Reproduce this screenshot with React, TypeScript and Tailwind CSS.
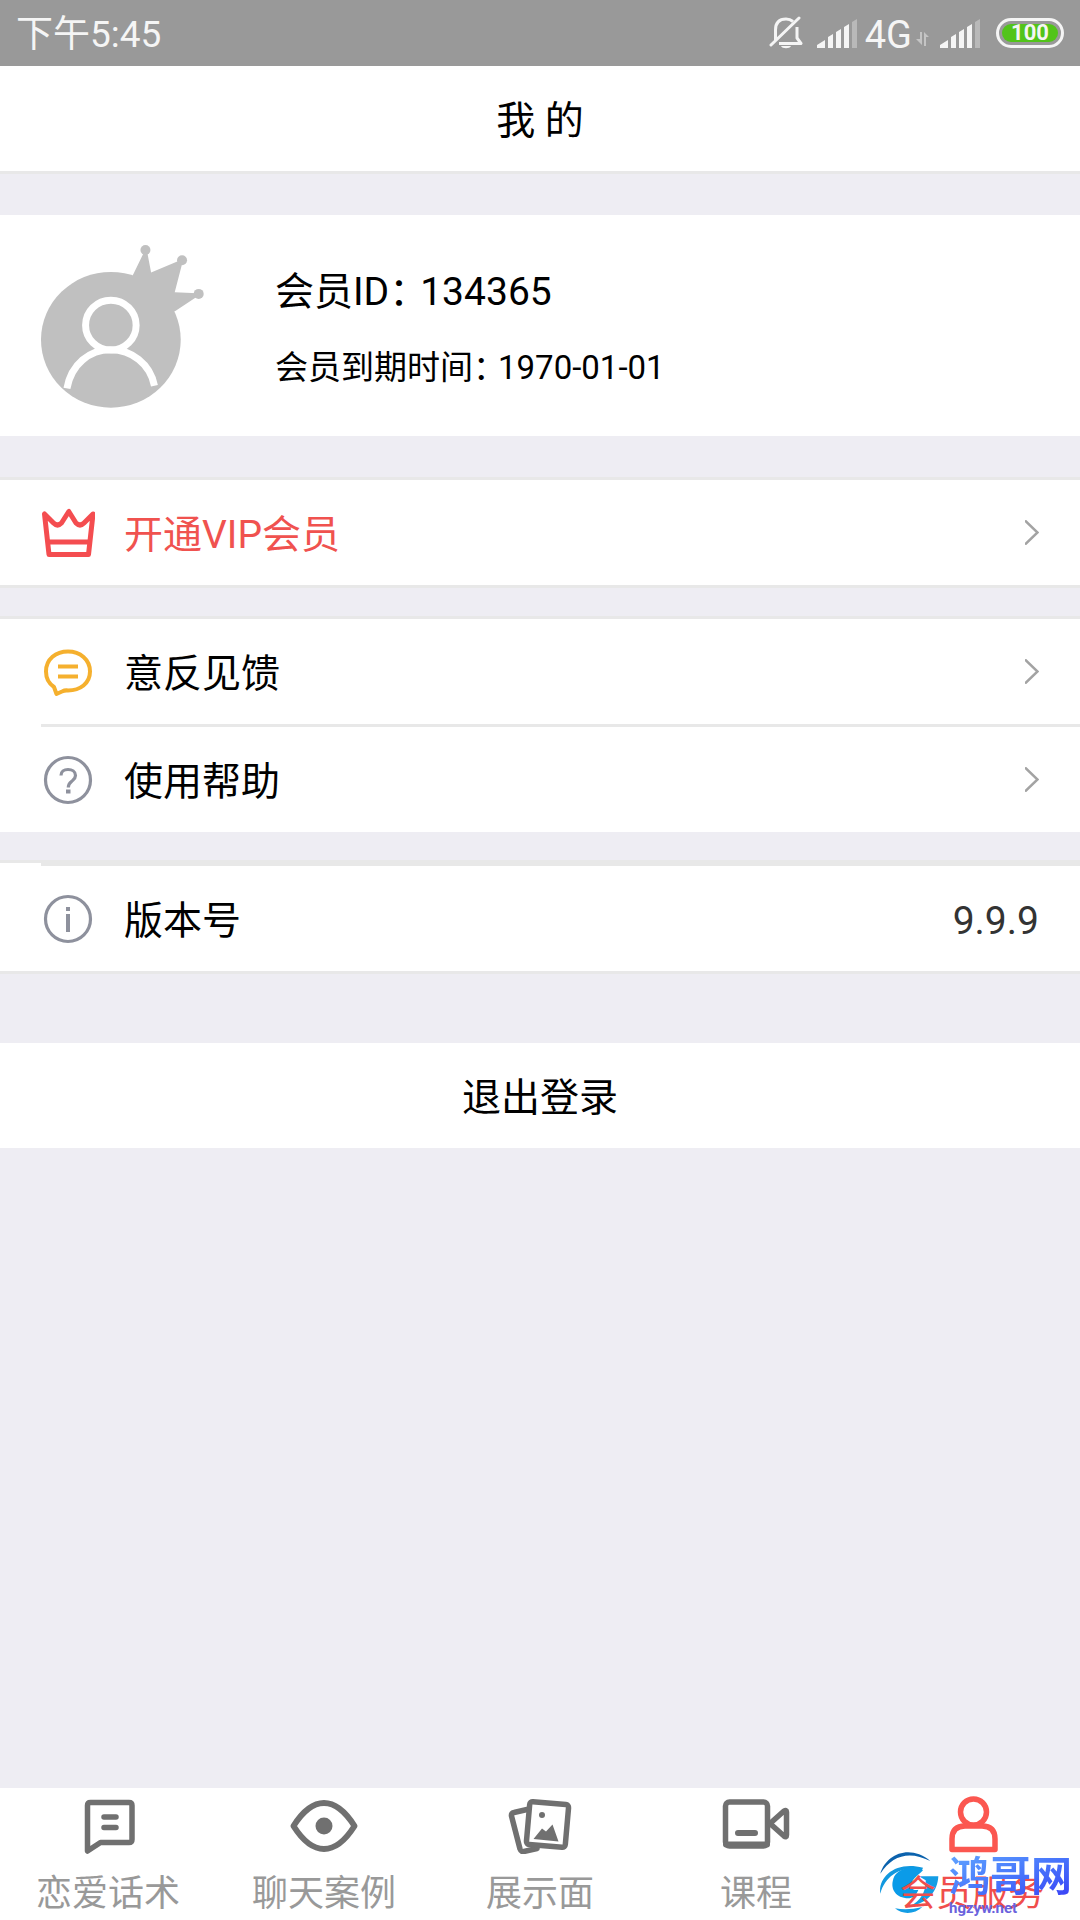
import type { ReactNode } from "react";

const StatusBar = () => (
    <div className="flex h-[66px] items-center justify-between bg-[#999999] pl-4 pr-4 text-[#f5f5f5]">
        <time className="pt-1 text-[37px] leading-[56px]">下午5:45</time>
        <div className="flex items-center">
            <svg className="h-[34px] w-[34px]" viewBox="0 0 34 34" fill="none" stroke="currentColor" strokeWidth="3">
                <path d="M6.500 24V14C6.500 6 11 3 17 3c3 0 5 .8 7 2.500M28 11v11l4 5.500H10" strokeLinejoin="round" />
                <path d="M2 29 30 2" strokeLinecap="round" />
                <path d="M12 30h10c-1 3-9 3-10 0z" fill="currentColor" stroke="none" />
            </svg>
            <Signal className="ml-3.5" />
            <span className="ml-2 pt-1 text-[38px] leading-[56px]">4G</span>
            <svg className="ml-1 mt-3 h-[14px] w-[14px]" viewBox="0 0 14 14" fill="#c4c4c4">
                <path d="M4 0h2v13L0 7h4zM8 14h2V5h3L8 0z" />
            </svg>
            <Signal className="ml-2.5" />
            <div className="ml-4 flex h-[30px] w-[68px] rounded-full border-3 border-[#f5f5f5] p-[3px]">
                <span className="flex flex-1 items-center justify-center rounded-full bg-[#52c41a] text-[22px] leading-none font-bold">
                    100
                </span>
            </div>
        </div>
    </div>
);

const Signal = ({ className }: { className: string }) => (
    <svg className={`h-[29px] w-10 ${className}`} viewBox="0 0 40 29" fill="currentColor">
        <path d="M0 29v-3l8-5v8zM11 29V18l5-3v14zM19 29V13l5-3v19zM27 29V8l5-3v24z" />
        <path d="M35 29V3l5-3v29z" opacity=".35" />
    </svg>
);

const Avatar = () => (
    <svg className="mt-0.5 h-[163px] w-[163px] shrink-0" viewBox="0 0 490 490" fill="#c0c0c0">
        <ellipse cx="210" cy="285" rx="210" ry="204" />
        <path d="M276 91 308 25h12l11 58 84-36 9 10-22 85 68 3 2 8-67 45-100 52z" />
        <circle cx="314" cy="15" r="15" />
        <circle cx="424" cy="46" r="15" />
        <circle cx="474" cy="147" r="15" />
        <g fill="none" stroke="#fff" strokeWidth="21">
            <ellipse cx="210" cy="241" rx="76" ry="75" />
            <path d="M78 431C91 358 146 315 209 315s119 42 132 108" />
        </g>
    </svg>
);

const Chevron = () => (
    <svg className="h-[25px] w-[14px]" viewBox="0 0 14 25" fill="none" stroke="#a3a3a3" strokeWidth="2.500">
        <path d="M0 .5 12.500 12.500 0 24.500" />
    </svg>
);

const CrownIcon = () => (
    <svg className="h-[54px] w-[54px]" viewBox="0 0 54 54" fill="none" stroke="#f44d50" strokeWidth="5" strokeLinejoin="round">
        <path d="M3.500 8 8 48.500h39.500L52 8l-9 9q-4 4-8 0L27.800 5.500 20.500 17q-4 4-8 0z" />
        <path d="M7 36h41.500" />
    </svg>
);

const FeedbackIcon = () => (
    <svg className="h-[54px] w-[54px]" viewBox="0 0 54 54" fill="none" stroke="#f5b02e" strokeWidth="4">
        <path d="M13 42C7 38 5 33 5 26.500 5 14 15 6.500 27 6.500s22 8 22 20-10 19-22 19q-3-.5-6 1l-5.500 2.500z" strokeLinejoin="round" />
        <path d="M17 21.500h20M17 31.500h20" />
    </svg>
);

const HelpIcon = () => (
    <svg className="h-[54px] w-[54px]" viewBox="0 0 54 54" fill="none" stroke="#8e919d" strokeWidth="3.200">
        <circle cx="27" cy="27" r="22.500" />
        <path d="M20 22.500c0-4 3-6 7-6s7.500 2 7.500 6c0 3-2 4-4 6-2.500 2-3.200 3-3.200 6" />
        <path d="M25 38.500h4.500" strokeWidth="4" />
    </svg>
);

const InfoIcon = () => (
    <svg className="h-[54px] w-[54px]" viewBox="0 0 54 54" fill="none" stroke="#8e919d" strokeWidth="4">
        <circle cx="27" cy="27" r="22.500" strokeWidth="3.200" />
        <path d="M27 15v4M27 22v18" />
    </svg>
);

const MenuRow = ({ icon, label, className = "" }: { icon: ReactNode; label: string; className?: string }) => (
    <a href="#" className={`flex h-[105px] items-center gap-[29px] px-[41px] ${className}`}>
        {icon}
        <span className="flex-1 pt-1">{label}</span>
        <Chevron />
    </a>
);

const tabs = [
    {
        label: "恋爱话术",
        icon: (
            <>
                <path d="M15.500 57V11.500q0-3 3-3H57q3 0 3 3v34q0 3-3 3H28.500z" />
                <path d="M32 23h12M32 33.500h12" />
            </>
        ),
    },
    {
        label: "聊天案例",
        icon: (
            <>
                <path d="M5.500 32C15 17 26 9 36 9s21 8 30.500 23C57 47 46 55 36 55S15 47 5.500 32z" strokeWidth="6" />
                <circle cx="36" cy="32" r="8.500" fill="currentColor" stroke="none" />
            </>
        ),
    },
    {
        label: "展示面",
        icon: (
            <>
                <path d="m23 15.500-13 3q-3 .5-2.500 3.500l8.500 33q1 3 4 2.500l13-3" />
                <rect x="24" y="9" width="39" height="43" rx="3" transform="rotate(5 43.500 30.500)" />
                <circle cx="38" cy="21" r="3" fill="currentColor" stroke="none" />
                <path d="M29.500 45 38 34.500l4 3 6.500-7 6 17z" fill="currentColor" stroke="none" />
            </>
        ),
    },
    {
        label: "课程",
        icon: (
            <>
                <rect x="5.500" y="8" width="42" height="44" rx="4" />
                <path d="M6 50.500h41M18 39h17" strokeWidth="6" />
                <path d="M50 29.500 64 17q2.500-1.500 2.500 1v23q0 3-2.500 1z" />
            </>
        ),
    },
    {
        label: "会员服务",
        active: true,
        icon: (
            <>
                <circle cx="37.500" cy="18" r="13" />
                <path d="M16 55.500V45q0-13 13-13h17q13 0 13 13v10.500z" />
            </>
        ),
    },
];

const MarkSwirl = () => (
    <svg className="pointer-events-none absolute right-[139px] bottom-[7px] h-[62px] w-[62px]" viewBox="0 0 186 186">
        <path d="M4 68C20 10 92-22 154 30 92-2 40 12 4 68z" fill="#0b62ad" />
        <path d="M4 128C-4 78 50 28 132 50l-4 10C90 42 22 60 4 128z" fill="#1198df" />
        <path d="M132 58C110 42 62 48 46 76c-18 40 8 68 46 66 14-4 22-14 26-26-12 4-22-2-22-14 2-16 18-26 36-44z" fill="#0a9be8" />
        <path d="M120 76h58c-2 46-34 82-82 88 28-14 46-44 44-76zM48 172c24 4 50 4 82-4-22 22-60 24-82 4z" fill="#139de5" />
    </svg>
);

const MarkText = () => (
    <div className="pointer-events-none absolute right-2 bottom-1 flex flex-col font-bold">
        <span className="bg-linear-to-br from-[#62a5ff] to-[#3b38f5] bg-clip-text text-[41px] leading-[46px] text-transparent">
            鸿哥网
        </span>
        <span className="text-[15px] leading-4 text-[#6a62dc]">hgzyw.net</span>
    </div>
);

const TabBar = () => (
    <nav className="relative grid h-[132px] grid-cols-5 bg-white">
        <MarkSwirl />
        {tabs.map((tab) => (
            <a
                key={tab.label}
                href="#"
                className={`relative flex flex-col items-center gap-4 pt-1.5 ${tab.active ? "text-[#fb5750]" : "text-[#707070]"}`}
            >
                <svg
                    className="h-[60px] w-[72px]"
                    viewBox="0 0 72 60"
                    fill="none"
                    stroke="currentColor"
                    strokeWidth="5.500"
                    strokeLinecap="round"
                    strokeLinejoin="round"
                >
                    {tab.icon}
                </svg>
                <span className={`text-4xl leading-[48px] ${tab.active ? "text-[#f04e4c]" : "text-[#999999]"}`}>
                    {tab.label}
                </span>
            </a>
        ))}
        <MarkText />
    </nav>
);

export default function App() {
    return (
        <div className="flex min-h-screen flex-col bg-[#eeedf3] font-[Roboto,'Noto_Sans_CJK_SC',sans-serif] text-[39px] leading-[56px] text-black">
            <StatusBar />
            <header className="flex h-[108px] items-center justify-center border-b-3 border-[#e8e8e8] bg-white">
                <h1 className="pt-1">我 的</h1>
            </header>

            <main className="flex flex-1 flex-col">
                {/* Member card */}
                <section className="mt-[41px] flex h-[221px] items-center gap-[71px] bg-white px-[41px]">
                    <Avatar />
                    <dl className="flex flex-col gap-6 pt-1">
                        <div className="flex">
                            <dt>会员ID：</dt>
                            <dd className="-ml-2">134365</dd>
                        </div>
                        <div className="flex text-[33px] leading-[48px]">
                            <dt>会员到期时间：</dt>
                            <dd className="-ml-2">1970-01-01</dd>
                        </div>
                    </dl>
                </section>

                <section className="mt-[41px] border-y-3 border-[#e8e8e8] bg-white">
                    <MenuRow icon={<CrownIcon />} label="开通VIP会员" className="text-[#f0524f]" />
                </section>

                <section className="mt-7 border-t-3 border-[#e8e8e8] bg-white">
                    <MenuRow icon={<FeedbackIcon />} label="意反见馈" />
                    <hr className="ml-[41px] border-t-3 border-[#e8e8e8]" />
                    <MenuRow icon={<HelpIcon />} label="使用帮助" />
                </section>

                <section className="mt-7 border-y-3 border-[#e8e8e8] bg-white">
                    <hr className="ml-[41px] border-t-3 border-[#e8e8e8]" />
                    <div className="flex h-[105px] items-center gap-[29px] px-[41px]">
                        <InfoIcon />
                        <span className="flex-1 pt-1">版本号</span>
                        <span className="pt-1 text-[#333333]">9.9.9</span>
                    </div>
                </section>

                <button type="button" className="mt-[69px] h-[105px] bg-white pt-1">
                    退出登录
                </button>
            </main>

            <TabBar />
        </div>
    );
}
